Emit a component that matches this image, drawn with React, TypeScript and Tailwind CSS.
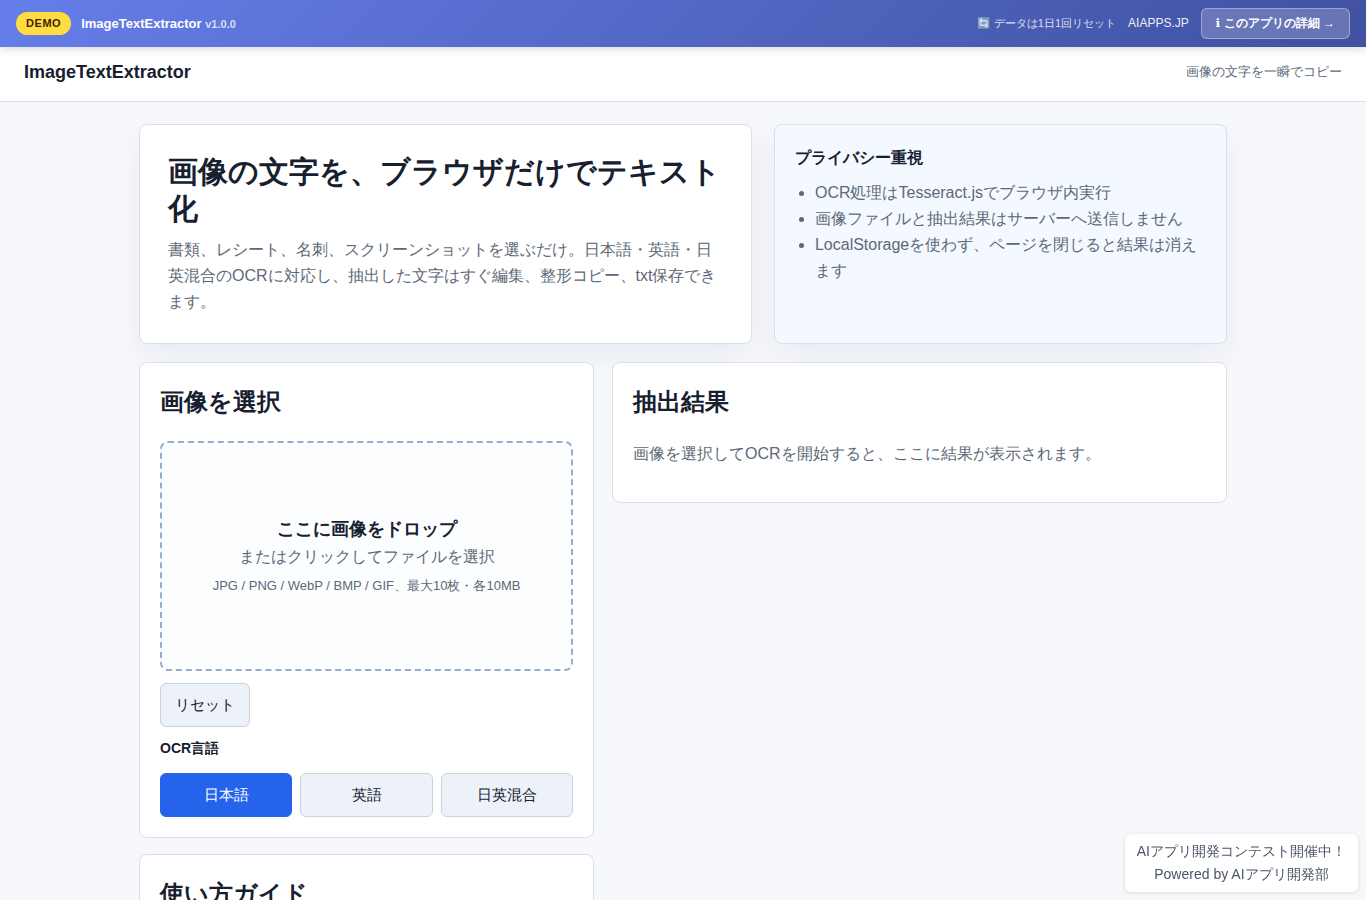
import { useState } from 'react';
import type { ReactNode } from 'react';

const LANGUAGES = [
  { id: 'jpn', label: '日本語' },
  { id: 'eng', label: '英語' },
  { id: 'mixed', label: '日英混合' },
];

const PRIVACY_POINTS = [
  'OCR処理はTesseract.jsでブラウザ内実行',
  '画像ファイルと抽出結果はサーバーへ送信しません',
  'LocalStorageを使わず、ページを閉じると結果は消えます',
];

function DemoBanner() {
  return (
    <div className="sticky top-0 z-20 flex items-center justify-between bg-linear-135 from-[#667eea] to-[#4051a0] px-4 py-2 text-white shadow-[0_2px_8px_rgba(0,0,0,0.15)]">
      <div className="flex items-center gap-[10px]">
        <span className="rounded-full bg-[#ffdd40] px-[10px] py-1 text-[11px] leading-[15px] font-bold tracking-wider text-[#422006]">
          DEMO
        </span>
        <span className="text-[13px] leading-[22px] font-bold">
          ImageTextExtractor <span className="text-[11px] opacity-75">v1.0.0</span>
        </span>
      </div>
      <div className="flex items-center gap-3">
        <span className="text-[11px] leading-[23px] opacity-80">🔄 データは1日1回リセット</span>
        <a href="#" className="text-xs leading-[23px] opacity-90">
          AIAPPS.JP
        </a>
        <a
          href="#about"
          className="rounded-md border border-white/35 bg-white/20 px-[14px] py-[6px] text-xs leading-[17px] font-bold"
        >
          <span className="font-['DejaVu_Sans',sans-serif]">ℹ</span> このアプリの詳細 →
        </a>
      </div>
    </div>
  );
}

function Card({ title, children }: { title: string; children?: ReactNode }) {
  return (
    <section className="rounded-lg border border-[#d8e0ea] bg-white p-5">
      <h2 className="mb-5 text-2xl leading-[38px] font-bold">{title}</h2>
      {children}
    </section>
  );
}

function Dropzone() {
  return (
    <label className="flex min-h-[230px] cursor-pointer flex-col items-center justify-center rounded-lg border-2 border-dashed border-[#94aed2] bg-[#fbfdff] text-center">
      <input type="file" accept="image/*" multiple className="sr-only" />
      <strong className="text-lg leading-[29px]">ここに画像をドロップ</strong>
      <span className="text-[#5d6978]">またはクリックしてファイルを選択</span>
      <small className="mt-1 text-[13px] leading-[23px] text-[#5d6978]">
        JPG / PNG / WebP / BMP / GIF、最大10枚・各10MB
      </small>
    </label>
  );
}

export default function App() {
  const [language, setLanguage] = useState('jpn');

  return (
    <div
      lang="ja"
      className="min-h-screen bg-[#f6f8fc] font-['Liberation_Sans',sans-serif] text-base leading-[26px] text-[#17202e]"
    >
      <DemoBanner />

      <header className="flex items-center justify-between border-b border-[#d8e0ea] bg-white px-6 pt-[11px] pb-[15px]">
        <strong className="text-lg leading-7">ImageTextExtractor</strong>
        <span className="text-[13px] leading-7 text-[#5d6978]">画像の文字を一瞬でコピー</span>
      </header>

      <main className="mx-auto max-w-[1120px] px-4 pt-[22px] pb-10">
        <div className="grid grid-cols-[23fr_17fr] gap-[22px]">
          <section className="rounded-lg border border-[#d8e0ea] bg-white p-7 shadow-[0_12px_30px_rgba(23,32,46,0.06)]">
            <h1 className="mb-[10px] text-3xl leading-[37px] font-bold">
              画像の文字を、ブラウザだけでテキスト化
            </h1>
            <p className="text-[#5d6978]">
              書類、レシート、名刺、スクリーンショットを選ぶだけ。日本語・英語・日英混合のOCRに対応し、抽出した文字はすぐ編集、整形コピー、txt保存できます。
            </p>
          </section>
          <aside className="rounded-lg border border-[#d8e0ea] bg-[#f4f9ff] p-5 shadow-[0_12px_30px_rgba(23,32,46,0.06)]">
            <strong>プライバシー重視</strong>
            <ul className="mt-[9px] list-disc pl-5 text-[#5d6978]">
              {PRIVACY_POINTS.map(point => (
                <li key={point}>{point}</li>
              ))}
            </ul>
          </aside>
        </div>

        <div className="mt-[18px] grid grid-cols-[37fr_50fr] items-start gap-[18px]">
          <div className="grid gap-4">
            <Card title="画像を選択">
              <Dropzone />
              <button
                type="button"
                onClick={() => setLanguage('jpn')}
                className="mt-3 block h-11 rounded-md border border-[#c8d3e2] bg-[#edf2f9] px-[14px] text-[15px]"
              >
                リセット
              </button>
              <div role="group" aria-labelledby="ocr-language" className="mt-[10px]">
                <div id="ocr-language" className="text-sm leading-[22px] font-bold">
                  OCR言語
                </div>
                <div className="mt-[14px] grid grid-cols-3 gap-2">
                  {LANGUAGES.map(({ id, label }) => (
                    <button
                      key={id}
                      type="button"
                      aria-pressed={language === id}
                      onClick={() => setLanguage(id)}
                      className={`h-11 rounded-md border text-[15px] ${
                        language === id
                          ? 'border-[#2563eb] bg-[#2563eb] text-white'
                          : 'border-[#c8d3e2] bg-[#edf2f9]'
                      }`}
                    >
                      {label}
                    </button>
                  ))}
                </div>
              </div>
            </Card>
            <Card title="使い方ガイド" />
          </div>

          <Card title="抽出結果">
            <p className="mb-[15px] text-[#5d6978]">画像を選択してOCRを開始すると、ここに結果が表示されます。</p>
          </Card>
        </div>
      </main>

      <div className="fixed right-2 bottom-2 z-30 rounded-md bg-white px-3 py-[6px] text-center text-sm leading-[23px] text-[#4a5568] shadow-[0_1px_4px_rgba(0,0,0,0.12)]">
        <div>AIアプリ開発コンテスト開催中！</div>
        <div>
          Powered by <a href="#">AIアプリ開発部</a>
        </div>
      </div>
    </div>
  );
}
